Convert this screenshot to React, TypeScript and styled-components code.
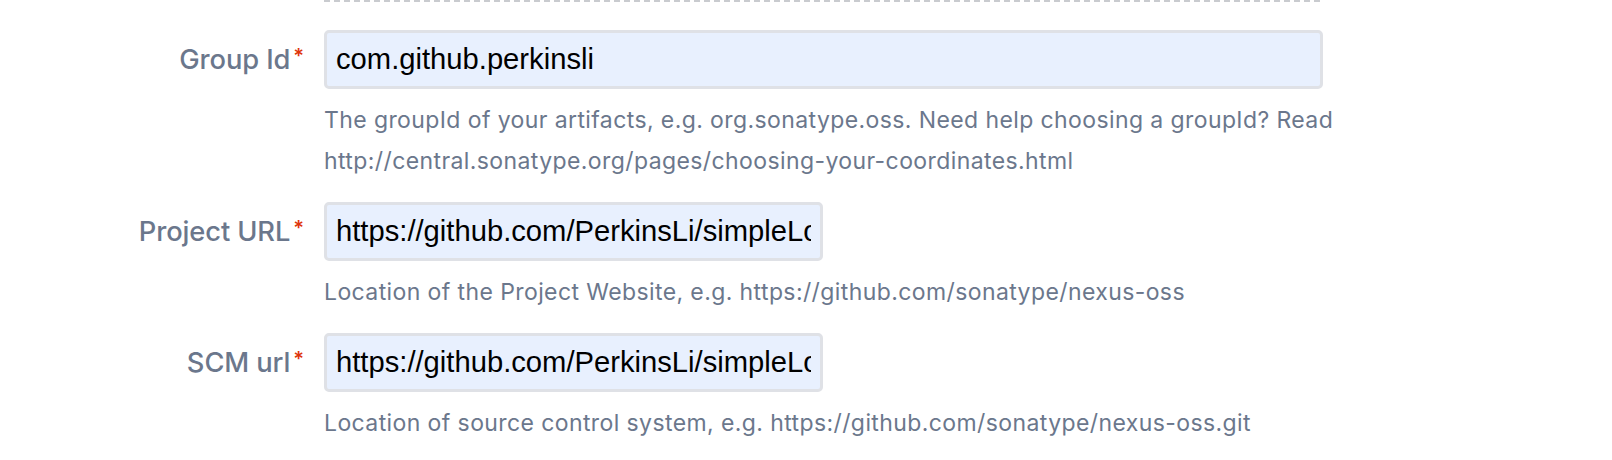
import React from "react";
import styled, { createGlobalStyle } from "styled-components";

const Global = createGlobalStyle`
  html, body { margin: 0; padding: 0; background: #ffffff; }
  body { font-family: Inter, "Noto Sans", sans-serif; }
`;

const Form = styled.div`
  display: grid;
  grid-template-columns: 304px 999px;
  column-gap: 20px;
  align-items: start;
`;

const Divider = styled.div`
  grid-column: 2;
  height: 2px;
  margin-bottom: 28px;
  background: repeating-linear-gradient(
    to right,
    #c9cbcf 0 6px,
    transparent 6px 10px
  );
`;

const Label = styled.label`
  grid-column: 1;
  height: 59px;
  display: flex;
  align-items: center;
  justify-content: flex-end;
  font-family: Inter, "Noto Sans", sans-serif;
  font-size: 27.3px;
  font-weight: 500;
  color: #6b778c;
  letter-spacing: -0.1px;
  white-space: nowrap;
`;

const Required = styled.span`
  color: #de350b;
  font-size: 20px;
  font-weight: 600;
  line-height: 1;
  align-self: flex-start;
  margin-top: 16px;
  margin-left: 3px;
`;

const Field = styled.div`
  grid-column: 2;
  display: flex;
  flex-direction: column;
  align-items: flex-start;
  margin-bottom: 20px;
`;

const Input = styled.input<{ $w: number }>`
  box-sizing: border-box;
  width: ${(p) => p.$w}px;
  height: 59px;
  margin: 0;
  padding: 0 9px;
  border: 3px solid #dfe1e6;
  border-radius: 5px;
  background: #e8f0fe;
  color: #000000;
  font-family: "Liberation Sans", Arial, sans-serif;
  font-size: 29.2px;
  outline: none;
`;

const Help = styled.div`
  margin-top: 11px;
  font-family: Inter, "Noto Sans", sans-serif;
  font-size: 23px;
  letter-spacing: 0.4px;
  line-height: 41px;
  color: #6b778c;
  white-space: nowrap;
`;

type Row = { label: string; value: string; width: number; help: string[] };

const rows: Row[] = [
  {
    label: "Group Id",
    value: "com.github.perkinsli",
    width: 999,
    help: [
      "The groupId of your artifacts, e.g. org.sonatype.oss. Need help choosing a groupId? Read",
      "http://central.sonatype.org/pages/choosing-your-coordinates.html",
    ],
  },
  {
    label: "Project URL",
    value: "https://github.com/PerkinsLi/simpleLogger",
    width: 499,
    help: ["Location of the Project Website, e.g. https://github.com/sonatype/nexus-oss"],
  },
  {
    label: "SCM url",
    value: "https://github.com/PerkinsLi/simpleLogger.git",
    width: 499,
    help: ["Location of source control system, e.g. https://github.com/sonatype/nexus-oss.git"],
  },
];

export default function App() {
  return (
    <>
      <Global />
      <Form>
        <Divider />
        {rows.map((r) => (
          <React.Fragment key={r.label}>
            <Label>
              {r.label}
              <Required>*</Required>
            </Label>
            <Field>
              <Input $w={r.width} defaultValue={r.value} readOnly />
              <Help>
                {r.help.map((h) => (
                  <div key={h}>{h}</div>
                ))}
              </Help>
            </Field>
          </React.Fragment>
        ))}
      </Form>
    </>
  );
}
